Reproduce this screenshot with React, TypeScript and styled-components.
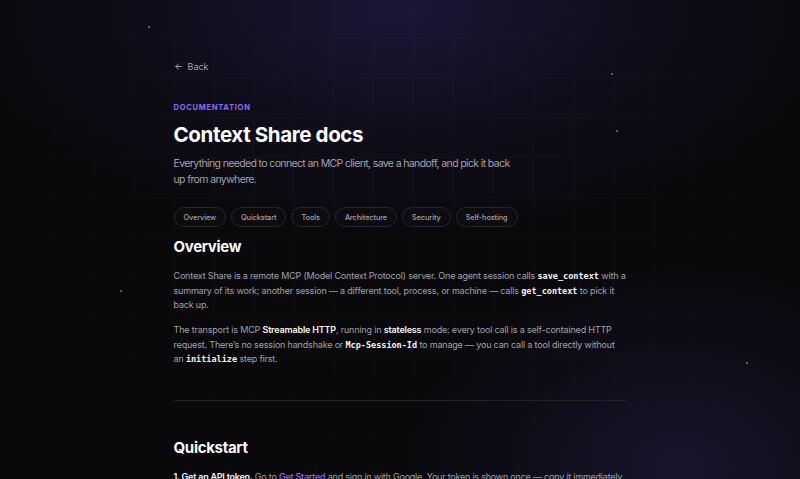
import styled, { createGlobalStyle } from 'styled-components';

const GlobalStyle = createGlobalStyle`
  * { box-sizing: border-box; }
  html, body { margin: 0; padding: 0; background: #09090c; }
  body {
    font-family: Inter, "Noto Sans", sans-serif;
    color: #e4e4e7;
    -webkit-font-smoothing: antialiased;
  }
`;

const sections = ['Overview', 'Quickstart', 'Tools', 'Architecture', 'Security', 'Self-hosting'];

const stars = [
  { x: 148, y: 26 },
  { x: 611, y: 73 },
  { x: 616, y: 130 },
  { x: 120, y: 290 },
  { x: 746, y: 362 },
];

export default function App() {
  return (
    <>
      <GlobalStyle />
      <Page>
        <Backdrop>
          <GlowTop />
          <GlowCorner />
          <Grid />
          {stars.map((s) => (
            <Star key={`${s.x}-${s.y}`} style={{ left: s.x, top: s.y }} />
          ))}
        </Backdrop>
        <Main>
          <BackLink href="#">
            <svg width="9" height="9" viewBox="0 0 24 24" fill="none" stroke="currentColor" strokeWidth="2.6" strokeLinecap="round" strokeLinejoin="round">
              <path d="M19 12H5" />
              <path d="M12 19l-7-7 7-7" />
            </svg>
            Back
          </BackLink>

          <Eyebrow>Documentation</Eyebrow>
          <Title>Context Share docs</Title>
          <Lead>
            Everything needed to connect an MCP client, save a handoff, and pick it back up from anywhere.
          </Lead>

          <PillRow>
            {sections.map((s) => (
              <Pill key={s} href={`#${s.toLowerCase()}`}>
                {s}
              </Pill>
            ))}
          </PillRow>

          <Section>
            <SectionTitle>Overview</SectionTitle>
            <Body>
              Context Share is a remote MCP (Model Context Protocol) server. One agent session calls{' '}
              <Code>save_context</Code> with a summary of its work; another session — a different tool,
              process, or machine — calls <Code>get_context</Code> to pick it back up.
            </Body>
            <Body>
              The transport is MCP <Strong>Streamable HTTP</Strong>, running in <Strong>stateless</Strong> mode:
              every tool call is a self-contained HTTP request. There’s no session handshake or{' '}
              <Code>Mcp-Session-Id</Code> to manage — you can call a tool directly without an{' '}
              <Code>initialize</Code> step first.
            </Body>
          </Section>

          <Divider />

          <Section $spaced>
            <SectionTitle>Quickstart</SectionTitle>
            <Step>
              <Strong>1. Get an API token.</Strong> Go to <Link href="#">Get Started</Link> and sign in with
              Google. Your token is shown once — copy it immediately.
            </Step>
          </Section>
        </Main>
      </Page>
    </>
  );
}

const Page = styled.div`
  position: relative;
  height: 479px;
  overflow: hidden;
  background: #09090c;
`;

const Backdrop = styled.div`
  position: absolute;
  inset: 0;
  pointer-events: none;
`;

const GlowTop = styled.div`
  position: absolute;
  left: 50%;
  top: -220px;
  width: 900px;
  height: 460px;
  transform: translateX(-50%);
  background: radial-gradient(ellipse at center, rgba(76, 60, 170, 0.26) 0%, rgba(60, 45, 140, 0.1) 40%, transparent 70%);
`;

const GlowCorner = styled.div`
  position: absolute;
  right: -160px;
  bottom: -200px;
  width: 560px;
  height: 420px;
  background: radial-gradient(ellipse at center, rgba(90, 70, 180, 0.2) 0%, rgba(70, 55, 150, 0.07) 45%, transparent 70%);
`;

const Grid = styled.div`
  position: absolute;
  inset: 0;
  background-image:
    linear-gradient(to right, rgba(255, 255, 255, 0.026) 1px, transparent 1px),
    linear-gradient(to bottom, rgba(255, 255, 255, 0.026) 1px, transparent 1px);
  background-size: 40px 40px;
  background-position: 13px 37px;
  mask-image: radial-gradient(ellipse 60% 70% at 50% 40%, #000 30%, transparent 100%);
`;

const Star = styled.span`
  position: absolute;
  width: 2px;
  height: 2px;
  border-radius: 50%;
  background: rgba(200, 200, 220, 0.55);
`;

const Main = styled.main`
  position: relative;
  width: 453px;
  margin: 0 auto;
  padding: 55px 0 0;
`;

const BackLink = styled.a`
  display: inline-flex;
  align-items: center;
  gap: 5px;
  height: 14px;
  font-size: 9px;
  color: #a1a1aa;
  text-decoration: none;
`;

const Eyebrow = styled.div`
  margin-top: 28px;
  font-size: 7.6px;
  line-height: 10px;
  font-weight: 700;
  letter-spacing: 0.09em;
  text-transform: uppercase;
  color: #8b6cf0;
`;

const Title = styled.h1`
  margin: 8px 0 0;
  font-size: 20.6px;
  line-height: 28px;
  font-weight: 700;
  letter-spacing: -0.02em;
  color: #fafafa;
`;

const Lead = styled.p`
  margin: 7px 0 0;
  max-width: 348px;
  font-size: 10.5px;
  line-height: 16px;
  letter-spacing: -0.06em;
  color: #a1a1aa;
`;

const PillRow = styled.nav`
  display: flex;
  gap: 5px;
  margin-top: 19px;
`;

const Pill = styled.a`
  display: inline-flex;
  align-items: center;
  height: 20px;
  padding: 0 9px;
  border: 1px solid #25252b;
  border-radius: 999px;
  background: rgba(255, 255, 255, 0.01);
  font-size: 7.3px;
  font-weight: 500;
  letter-spacing: -0.01em;
  color: #a1a1aa;
  text-decoration: none;
`;

const Section = styled.section<{ $spaced?: boolean }>`
  margin-top: ${(p) => (p.$spaced ? '37px' : '10px')};
`;

const SectionTitle = styled.h2`
  margin: 0 0 12px;
  font-size: 15px;
  line-height: 20px;
  font-weight: 700;
  letter-spacing: -0.02em;
  color: #fafafa;
`;

const Body = styled.p`
  margin: 0 0 10.5px;
  font-size: 9px;
  line-height: 14.5px;
  letter-spacing: -0.02em;
  color: #a1a1aa;
`;

const Step = styled(Body)`
  letter-spacing: -0.025em;
  white-space: nowrap;
`;

const Code = styled.code`
  font-family: "DejaVu Sans Mono", "Liberation Mono", monospace;
  font-size: 8.5px;
  font-weight: 700;
  letter-spacing: 0;
  color: #f4f4f5;
`;

const Strong = styled.strong`
  font-weight: 600;
  color: #f4f4f5;
`;

const Link = styled.a`
  color: #8b6cf0;
  font-weight: 500;
  text-decoration: none;
`;

const Divider = styled.hr`
  margin: 33px 0 0;
  border: 0;
  height: 1px;
  background: #222228;
`;
